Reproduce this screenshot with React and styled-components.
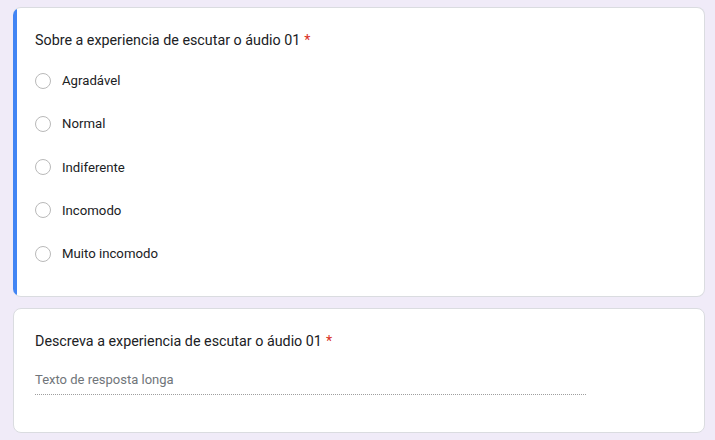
import React from 'react';
import styled, { createGlobalStyle } from 'styled-components';

const GlobalStyle = createGlobalStyle`
  html, body {
    margin: 0;
    background: #f0ebf8;
    font-family: Roboto, "Liberation Sans", Arial, sans-serif;
  }
`;

const Page = styled.div`
  display: flex;
  flex-direction: column;
  gap: 11px;
  padding: 7px 10px 0 13px;
`;

const Card = styled.div`
  position: relative;
  background: #fff;
  border: 1px solid #dadce0;
  border-radius: 8px;
  padding: ${({ $pad }) => $pad};
  overflow: hidden;

  ${({ $active }) =>
    $active &&
    `
    border-left: none;
    &::before {
      content: '';
      position: absolute;
      left: 0;
      top: 0;
      bottom: 0;
      width: 4px;
      background: #4285f4;
    }
  `}
`;

const Title = styled.div`
  font-size: 14.3px;
  line-height: 24px;
  color: #202124;
`;

const Star = styled.span`
  color: #d93025;
  margin-left: 4px;
`;

const Options = styled.div`
  display: flex;
  flex-direction: column;
  margin-top: 7px;
`;

const Option = styled.label`
  display: flex;
  align-items: center;
  height: 43.25px;
  gap: 11px;
  font-size: 13.2px;
  color: #202124;
`;

const Radio = styled.span`
  width: 16px;
  height: 16px;
  box-sizing: border-box;
  border: 1.5px solid #b9b9b9;
  border-radius: 50%;
  flex-shrink: 0;
`;

const Answer = styled.div`
  width: 551px;
  margin-top: 18px;
  padding-bottom: 5px;
  border-bottom: 1px dotted #9e9e9e;
  font-size: 13px;
  line-height: 18px;
  color: #70757a;
`;

const options = ['Agradável', 'Normal', 'Indiferente', 'Incomodo', 'Muito incomodo'];

const App = () => (
  <>
    <GlobalStyle />
    <Page>
      <Card $active $pad="20px 21px 21px 22px">
        <Title>
          Sobre a experiencia de escutar o áudio 01<Star>*</Star>
        </Title>
        <Options>
          {options.map((o) => (
            <Option key={o}>
              <Radio />
              {o}
            </Option>
          ))}
        </Options>
      </Card>
      <Card $pad="20px 21px 37px 21px">
        <Title>
          Descreva a experiencia de escutar o áudio 01<Star>*</Star>
        </Title>
        <Answer>Texto de resposta longa</Answer>
      </Card>
    </Page>
  </>
);

export default App;
